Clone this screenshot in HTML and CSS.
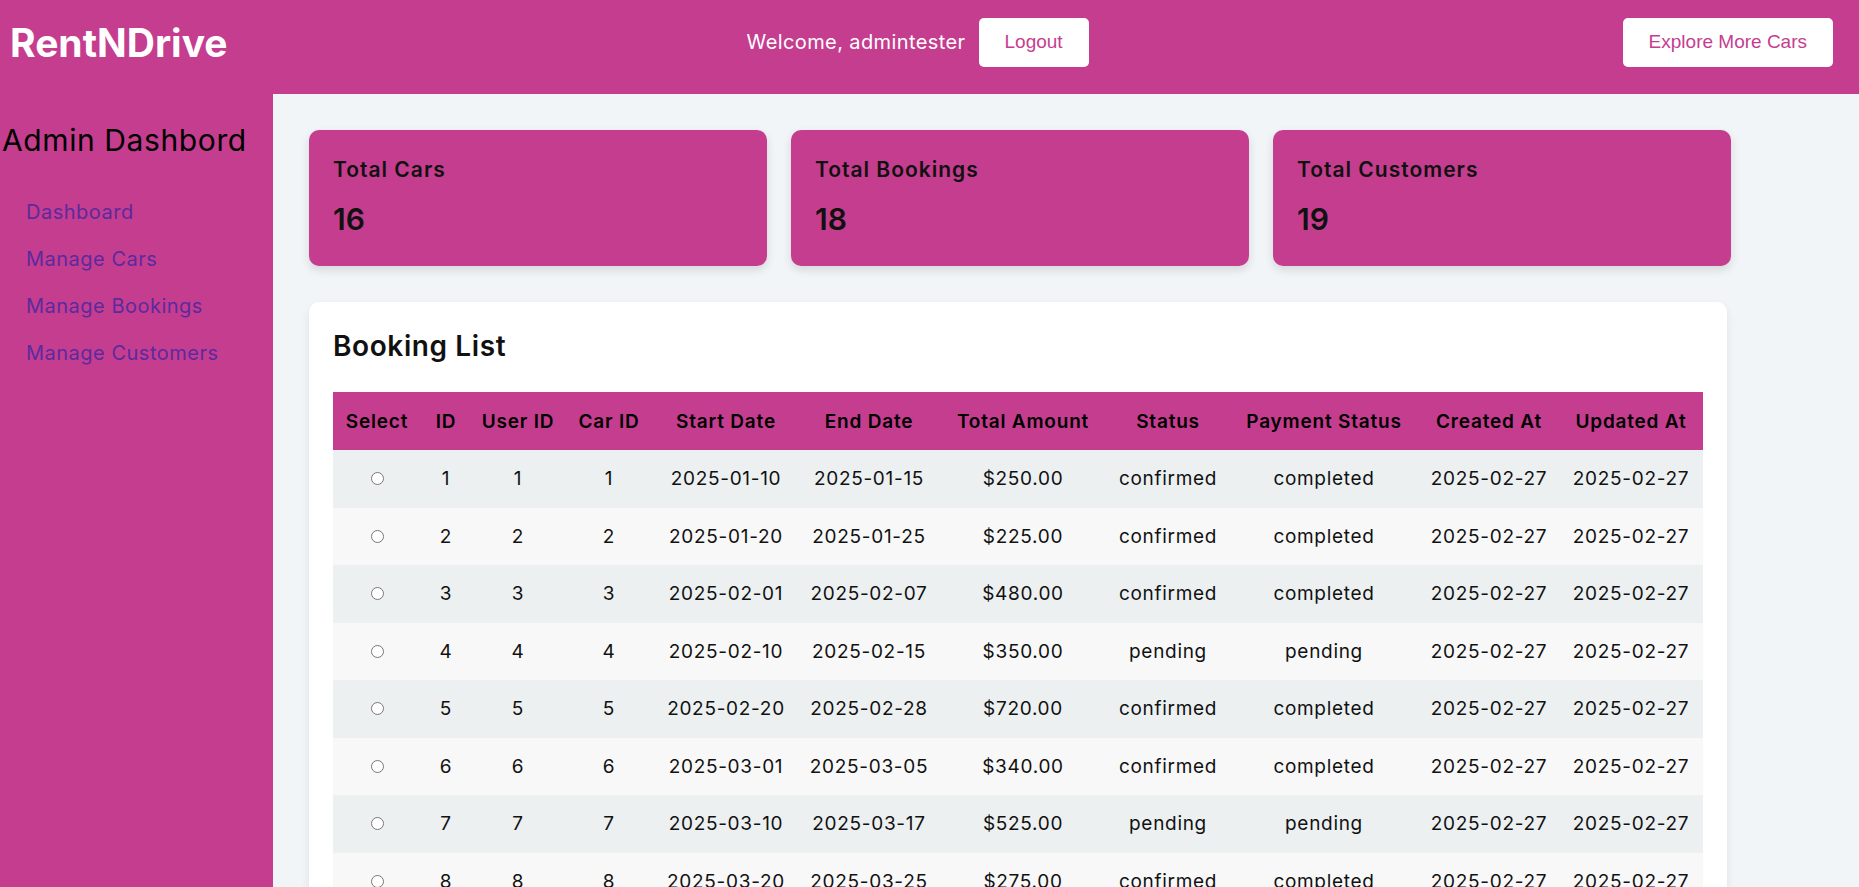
FILE: index.html
```html
<!DOCTYPE html>
<html lang="en">
<head>
<meta charset="utf-8">
<title>RentNDrive Admin</title>
<link rel="stylesheet" href="styles.css">
</head>
<body>
<header class="topbar">
  <div class="logo">RentNDrive</div>
  <div class="user-box">
    <span class="welcome">Welcome, admintester</span>
    <button class="btn">Logout</button>
  </div>
  <button class="btn btn-explore">Explore More Cars</button>
</header>
<div class="layout">
  <aside class="sidebar">
    <h2 class="side-title">Admin Dashbord</h2>
    <nav class="side-nav">
      <a href="#">Dashboard</a>
      <a href="#">Manage Cars</a>
      <a href="#">Manage Bookings</a>
      <a href="#">Manage Customers</a>
    </nav>
  </aside>
  <main class="main">
    <section class="stats">
      <div class="stat-card"><h3>Total Cars</h3><p>16</p></div>
      <div class="stat-card"><h3>Total Bookings</h3><p>18</p></div>
      <div class="stat-card"><h3>Total Customers</h3><p>19</p></div>
    </section>
    <section class="panel">
      <h2 class="panel-title">Booking List</h2>
      <table class="bookings">
        <colgroup>
          <col class="c-select"><col class="c-id"><col class="c-user"><col class="c-car"><col class="c-start"><col class="c-end"><col class="c-amount"><col class="c-status"><col class="c-pay"><col class="c-created"><col class="c-updated">
        </colgroup>
        <thead>
          <tr><th>Select</th><th>ID</th><th>User ID</th><th>Car ID</th><th>Start Date</th><th>End Date</th><th>Total Amount</th><th>Status</th><th>Payment Status</th><th>Created At</th><th>Updated At</th></tr>
        </thead>
        <tbody>
          <tr><td><input type="radio" name="sel"></td><td>1</td><td>1</td><td>1</td><td>2025-01-10</td><td>2025-01-15</td><td>$250.00</td><td>confirmed</td><td>completed</td><td>2025-02-27</td><td>2025-02-27</td></tr>
          <tr><td><input type="radio" name="sel"></td><td>2</td><td>2</td><td>2</td><td>2025-01-20</td><td>2025-01-25</td><td>$225.00</td><td>confirmed</td><td>completed</td><td>2025-02-27</td><td>2025-02-27</td></tr>
          <tr><td><input type="radio" name="sel"></td><td>3</td><td>3</td><td>3</td><td>2025-02-01</td><td>2025-02-07</td><td>$480.00</td><td>confirmed</td><td>completed</td><td>2025-02-27</td><td>2025-02-27</td></tr>
          <tr><td><input type="radio" name="sel"></td><td>4</td><td>4</td><td>4</td><td>2025-02-10</td><td>2025-02-15</td><td>$350.00</td><td>pending</td><td>pending</td><td>2025-02-27</td><td>2025-02-27</td></tr>
          <tr><td><input type="radio" name="sel"></td><td>5</td><td>5</td><td>5</td><td>2025-02-20</td><td>2025-02-28</td><td>$720.00</td><td>confirmed</td><td>completed</td><td>2025-02-27</td><td>2025-02-27</td></tr>
          <tr><td><input type="radio" name="sel"></td><td>6</td><td>6</td><td>6</td><td>2025-03-01</td><td>2025-03-05</td><td>$340.00</td><td>confirmed</td><td>completed</td><td>2025-02-27</td><td>2025-02-27</td></tr>
          <tr><td><input type="radio" name="sel"></td><td>7</td><td>7</td><td>7</td><td>2025-03-10</td><td>2025-03-17</td><td>$525.00</td><td>pending</td><td>pending</td><td>2025-02-27</td><td>2025-02-27</td></tr>
          <tr><td><input type="radio" name="sel"></td><td>8</td><td>8</td><td>8</td><td>2025-03-20</td><td>2025-03-25</td><td>$275.00</td><td>confirmed</td><td>completed</td><td>2025-02-27</td><td>2025-02-27</td></tr>
        </tbody>
      </table>
    </section>
  </main>
</div>
</body>
</html>
```

FILE: styles.css
```css
* { box-sizing: border-box; }

html, body {
  margin: 0;
  padding: 0;
}

body {
  font-family: "Inter", "Noto Sans", sans-serif;
  background: #f2f5f8;
  color: #111;
}

.topbar {
  height: 94px;
  background: #c53d8f;
  display: flex;
  align-items: center;
  justify-content: space-between;
  padding: 0 26px 10px 10px;
}

.logo {
  font-family: "Inter", "Liberation Sans", sans-serif;
  font-weight: 700;
  font-size: 39px;
  color: #fff;
}

.user-box {
  display: flex;
  align-items: center;
  gap: 13px;
  margin-right: 15px;
}

.welcome {
  color: #fff;
  font-size: 20px;
  letter-spacing: 0.4px;
}

.btn {
  font-family: "Liberation Sans", Arial, sans-serif;
  font-size: 19px;
  color: #c53d8f;
  background: #fff;
  border: none;
  border-radius: 5px;
  height: 49px;
  padding: 0 26px;
}

.layout {
  display: flex;
  min-height: calc(100vh - 94px);
}

.sidebar {
  width: 273px;
  flex-shrink: 0;
  background: #c53d8f;
  padding: 28px 0 0 2px;
}

.side-title {
  margin: 0;
  font-size: 30px;
  font-weight: 400;
  letter-spacing: 0.6px;
  color: #000;
  line-height: 36px;
}

.side-nav {
  display: flex;
  flex-direction: column;
  gap: 21px;
  padding: 41px 0 0 24px;
}

.side-nav a {
  color: #5b2a9e;
  text-decoration: none;
  font-size: 20px;
  letter-spacing: 0.5px;
  line-height: 26px;
}

.main {
  flex: 1;
  padding: 36px;
}

.stats {
  display: grid;
  grid-template-columns: repeat(3, 1fr);
  gap: 24px;
  max-width: 1422px;
}

.stat-card {
  background: #c53d8f;
  border-radius: 10px;
  height: 136px;
  padding: 24px;
  box-shadow: 0 4px 10px rgba(0, 0, 0, 0.12);
}

.stat-card h3 {
  margin: 0;
  font-size: 21px;
  font-weight: 600;
  letter-spacing: 1px;
  line-height: 32px;
}

.stat-card p {
  margin: 16px 0 0;
  font-size: 30px;
  font-weight: 600;
  line-height: 34px;
}

.panel {
  margin-top: 36px;
  max-width: 1418px;
  background: #fff;
  border-radius: 10px;
  padding: 24px;
  box-shadow: 0 4px 10px rgba(0, 0, 0, 0.08);
}

.panel-title {
  margin: 0 0 26px;
  font-size: 28px;
  font-weight: 600;
  letter-spacing: 0.6px;
  line-height: 40px;
}

.bookings {
  width: 100%;
  border-collapse: collapse;
  table-layout: fixed;
  text-align: center;
}

.c-select { width: 88px; }
.c-id { width: 50px; }
.c-user { width: 94px; }
.c-car { width: 88px; }
.c-start { width: 146px; }
.c-end { width: 140px; }
.c-amount { width: 168px; }
.c-status { width: 122px; }
.c-pay { width: 190px; }
.c-created { width: 140px; }
.c-updated { width: 144px; }

.bookings th {
  background: #c53d8f;
  color: #000;
  font-weight: 600;
  font-size: 19px;
  letter-spacing: 0.8px;
  height: 58px;
  padding: 0;
  white-space: nowrap;
}

.bookings td {
  font-size: 19px;
  letter-spacing: 0.7px;
  height: 57.5px;
  padding: 0;
  color: #111;
  white-space: nowrap;
}

.bookings tbody tr:nth-child(odd) { background: #ecf0f1; }
.bookings tbody tr:nth-child(even) { background: #f8f8f8; }

.bookings input[type="radio"] {
  margin: 0;
  width: 13px;
  height: 13px;
}
```
